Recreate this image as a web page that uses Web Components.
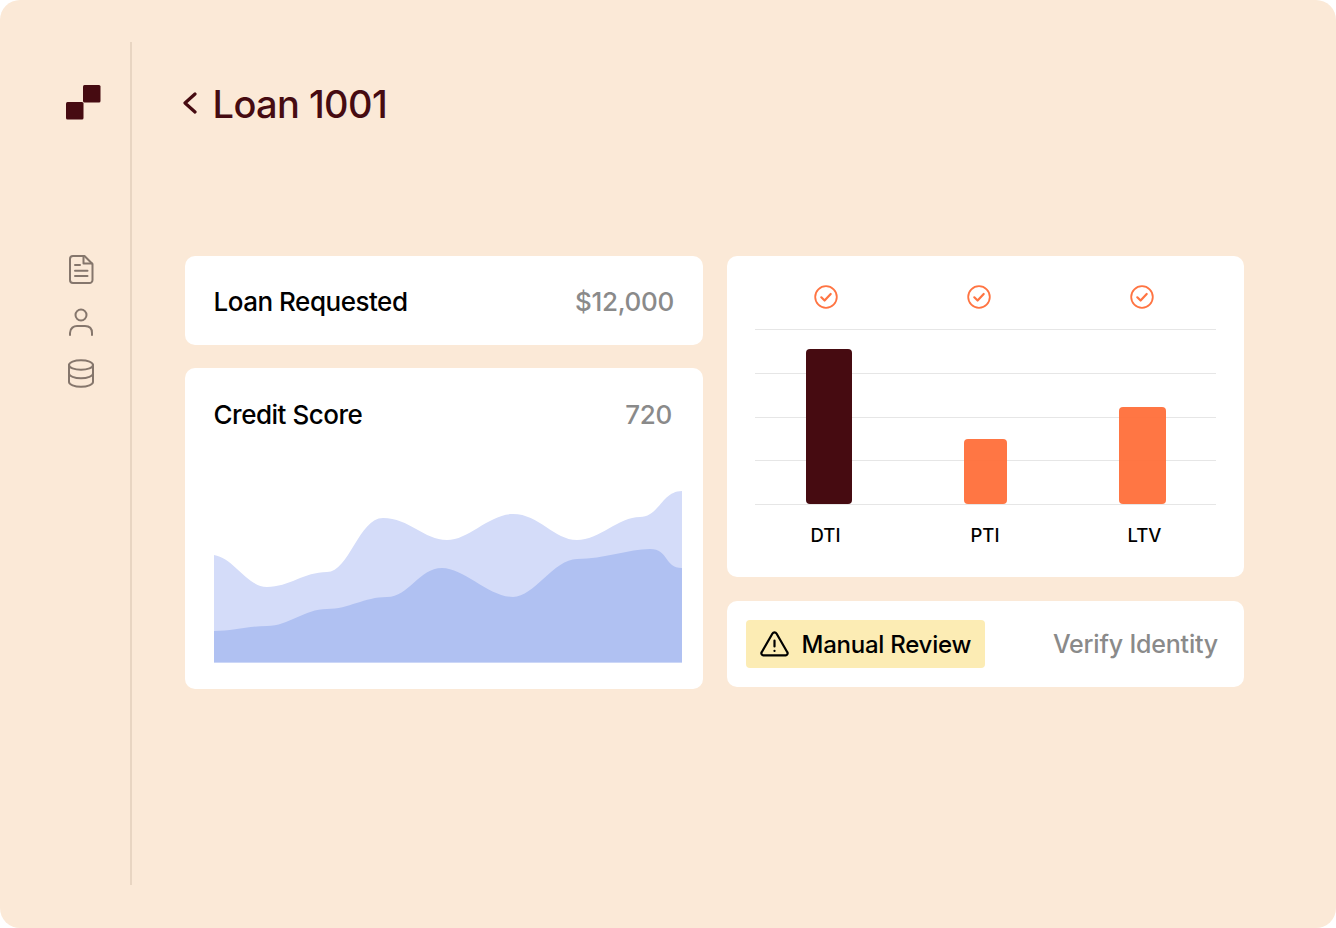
<!DOCTYPE html>
<html>
<head>
<meta charset="utf-8">
<title>Loan 1001</title>
<style>
  html, body { margin: 0; padding: 0; background: #fff; }
  body { width: 1336px; height: 928px; overflow: hidden; font-family: Inter, "Liberation Sans", sans-serif; }
</style>
</head>
<body>
<loan-app>
  <side-bar slot="side"></side-bar>
  <page-title slot="title">Loan 1001</page-title>
  <div slot="left" style="display:contents">
    <stat-card label="Loan Requested" value="$12,000"></stat-card>
    <credit-card label="Credit Score" value="720"></credit-card>
  </div>
  <div slot="right" style="display:contents">
    <ratio-card></ratio-card>
    <review-card></review-card>
  </div>
</loan-app>

<script>
class LoanApp extends HTMLElement {
  constructor() {
    super();
    this.attachShadow({ mode: "open" }).innerHTML = `
      <style>
        :host {
          display: flex;
          width: 1336px;
          height: 928px;
          box-sizing: border-box;
          padding: 42px 0 43px;
          background: #fbe9d7;
          border-radius: 20px;
        }
        main { flex: 1; padding-left: 53px; }
        .cols {
          display: grid;
          grid-template-columns: 518px 517.5px;
          column-gap: 23.5px;
          margin-top: 88px;
        }
        .col { display: flex; flex-direction: column; }
      </style>
      <slot name="side"></slot>
      <main>
        <slot name="title"></slot>
        <div class="cols">
          <div class="col"><slot name="left"></slot></div>
          <div class="col"><slot name="right"></slot></div>
        </div>
      </main>
    `;
  }
}

class SideBar extends HTMLElement {
  constructor() {
    super();
    this.attachShadow({ mode: "open" }).innerHTML = `
      <style>
        :host {
          display: flex;
          flex-direction: column;
          width: 132px;
          box-sizing: border-box;
          border-right: 2px solid #e8d5c2;
          padding-top: 43px;
          padding-left: 66px;
        }
        svg { display: block; fill: none; stroke: #85766c; stroke-width: 2; stroke-linecap: round; stroke-linejoin: round; }
        .logo { margin-bottom: 135px; fill: #460b11; stroke: none; }
        .doc { margin: 0 0 23.5px 3px; }
        .user { margin: 0 0 23.5px 3px; }
        .db { margin-left: 2px; }
      </style>
      <svg class="logo" width="35" height="35" viewBox="0 0 35 35">
        <rect x="17" y="0" width="17.5" height="17.5" rx="1.500"/>
        <rect x="0" y="17" width="17.5" height="17.5" rx="1.500"/>
      </svg>
      <svg class="doc" width="25" height="29" viewBox="0 0 25 29">
        <path d="M4 1H15.500L23.500 9V25A3 3 0 0 1 20.500 28H4A3 3 0 0 1 1 25V4A3 3 0 0 1 4 1Z"/>
        <path d="M14.500 1.500V8.500H23"/>
        <path d="M6 10H11M6 15.700H18.500M6 21H18.500"/>
      </svg>
      <svg class="user" width="25" height="28" viewBox="0 0 25 28">
        <circle cx="12" cy="7" r="5.500"/>
        <path d="M1 27V25C1 20 5 18 8 18H16C20 18 23 20 23 25V27"/>
      </svg>
      <svg class="db" width="26" height="29" viewBox="0 0 26 29">
        <ellipse cx="13" cy="6" rx="12" ry="4.800"/>
        <path d="M1 6V23C1 25.500 6.500 27.800 13 27.800S25 25.500 25 23V6"/>
        <path d="M1 14.500C1 17 6.500 19.300 13 19.300S25 17 25 14.500"/>
      </svg>
    `;
  }
}

class PageTitle extends HTMLElement {
  constructor() {
    super();
    this.attachShadow({ mode: "open" }).innerHTML = `
      <style>
        :host {
          display: flex;
          align-items: center;
          height: 126px;
          color: #460b11;
          font-size: 38px;
          font-weight: 450;
          letter-spacing: -0.6px;
        }
        svg { display: block; margin: -4px 15.5px 0 -2px; }
        span { margin-top: -1.5px; }
      </style>
      <svg width="14" height="24" viewBox="0 0 14 24" fill="none" stroke="#460b11" stroke-width="3.200" stroke-linecap="round" stroke-linejoin="round">
        <path d="M12 3L2 12L12 21"/>
      </svg>
      <span><slot></slot></span>
    `;
  }
}

const cardStyle = `
  :host {
    display: block;
    box-sizing: border-box;
    background: #fff;
    border-radius: 10px;
  }
  .head {
    display: flex;
    justify-content: space-between;
    align-items: center;
    font-size: 26px;
    font-weight: 500;
    letter-spacing: -0.48px;
    color: #000;
  }
  .val { color: #8a8a8a; font-weight: 500; letter-spacing: -0.3px; }
`;

class StatCard extends HTMLElement {
  constructor() {
    super();
    this.attachShadow({ mode: "open" }).innerHTML = `
      <style>
        ${cardStyle}
        :host { height: 89px; padding: 0 29px 0 28.5px; margin-bottom: 23px; }
        .head { height: 91px; }
      </style>
      <div class="head"><span>${this.getAttribute("label")}</span><span class="val">${this.getAttribute("value")}</span></div>
    `;
  }
}

class CreditCard extends HTMLElement {
  constructor() {
    super();
    this.attachShadow({ mode: "open" }).innerHTML = `
      <style>
        ${cardStyle}
        :host { height: 321px; padding: 0 21px 27px 28.5px; }
        .head { height: 92px; padding-right: 10px; }
        svg { display: block; margin: 30px 0 0 0.5px; }
      </style>
      <div class="head"><span>${this.getAttribute("label")}</span><span class="val">${this.getAttribute("value")}</span></div>
      <svg width="468" height="173" viewBox="0 0 468 173">
        <path fill="#d4dcf9" d="M0 65C20 68 33 97 53 97C75 97 90 82 113 82C135 82 145 28 169 28C195 28 210 50 233 50C255 50 275 24 299 24C325 24 340 50 363 50C385 50 405 27 426 27C445 27 448 1 468 1V172.500H0Z"/>
        <path fill="#b0c1f2" d="M0 141C18 141 35 136 53 136C75 136 90 119 113 119C135 119 150 107 173 107C195 107 205 78 228 78C250 78 275 107 299 107C320 107 340 69 363 69C390 69 415 59 436 59C455 59 450 78 468 78V172.500H0Z"/>
      </svg>
    `;
  }
}

class RatioCard extends HTMLElement {
  constructor() {
    super();
    const check = `<svg width="24" height="24" viewBox="0 0 24 24" fill="none" stroke="#ff7442" stroke-linecap="round" stroke-linejoin="round"><circle cx="12" cy="12" r="10.800" stroke-width="1.800"/><path d="M7.300 12.300L10.600 15.500L16.700 9" stroke-width="2.200"/></svg>`;
    this.attachShadow({ mode: "open" }).innerHTML = `
      <style>
        ${cardStyle}
        :host { height: 321px; padding: 29px 28px 0 28.5px; margin-bottom: 23.5px; }
        .checks { position: relative; height: 44px; }
        .checks span { position: absolute; top: 0; }
        .checks svg { display: block; }
        .plot { position: relative; height: 176px; display: flex; flex-direction: column; justify-content: space-between; }
        .plot i { display: block; height: 1px; background: #e6e6e6; }
        .bar { position: absolute; bottom: 1px; border-radius: 4px; }
        .labels { position: relative; height: 40px; font-size: 18.5px; font-weight: 500; color: #000; }
        .labels span { position: absolute; top: 19px; transform: translateX(-50%); line-height: 22px; }
      </style>
      <div class="checks">
        <span style="left:58.5px">${check}</span>
        <span style="left:211.800px">${check}</span>
        <span style="left:374.800px">${check}</span>
      </div>
      <div class="plot">
        <i></i><i></i><i></i><i></i><i></i>
        <div class="bar" style="left:50.5px;width:46px;height:155px;background:#460b11"></div>
        <div class="bar" style="left:208.5px;width:43.5px;height:65px;background:rgba(255,112,60,.96)"></div>
        <div class="bar" style="left:363.5px;width:47px;height:97.5px;background:rgba(255,112,60,.96)"></div>
      </div>
      <div class="labels">
        <span style="left:70.5px">DTI</span>
        <span style="left:230px">PTI</span>
        <span style="left:389.5px">LTV</span>
      </div>
    `;
  }
}

class ReviewCard extends HTMLElement {
  constructor() {
    super();
    this.attachShadow({ mode: "open" }).innerHTML = `
      <style>
        ${cardStyle}
        :host { height: 86px; padding: 0 26px 0 19.5px; display: flex; align-items: center; justify-content: space-between; }
        .badge {
          display: flex;
          align-items: center;
          gap: 12.5px;
          height: 48px;
          box-sizing: border-box;
          width: 239px;
          padding-left: 14px;
          background: #fcecb4;
          border-radius: 4px;
          font-size: 24px;
          font-weight: 500;
          letter-spacing: -0.25px;
          color: #000;
        }
        .badge span { padding-top: 1px; }
        svg { display: block; }
        .verify { padding-top: 1px; font-size: 25px; font-weight: 500; letter-spacing: -0.2px; color: #8a8a8a; }
      </style>
      <div class="badge">
        <svg width="29" height="26" viewBox="0 0 29 26" fill="none" stroke="#000" stroke-width="2.200" stroke-linecap="round" stroke-linejoin="round">
          <path d="M12.500 2.500L1.700 21.200A2 2 0 0 0 3.500 24.300H25.500A2 2 0 0 0 27.300 21.200L16.500 2.500A2.300 2.300 0 0 0 12.500 2.500Z"/>
          <path d="M14.500 9.500V15.500M14.500 19.800V19.900"/>
        </svg>
        <span>Manual Review</span>
      </div>
      <span class="verify">Verify Identity</span>
    `;
  }
}

customElements.define("loan-app", LoanApp);
customElements.define("side-bar", SideBar);
customElements.define("page-title", PageTitle);
customElements.define("stat-card", StatCard);
customElements.define("credit-card", CreditCard);
customElements.define("ratio-card", RatioCard);
customElements.define("review-card", ReviewCard);
</script>
</body>
</html>
